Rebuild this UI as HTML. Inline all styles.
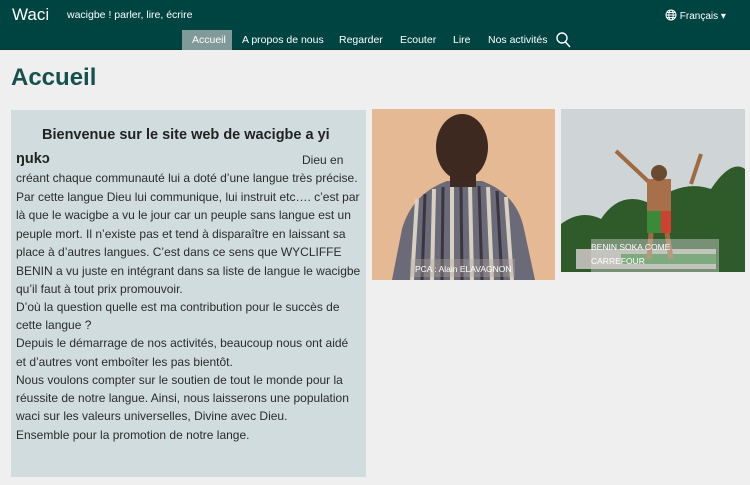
<!DOCTYPE html>
<html><head><meta charset="utf-8"><style>
*{margin:0;padding:0;box-sizing:border-box}
body{width:750px;height:485px;background:#efefef;font-family:"Liberation Sans",sans-serif;position:relative;overflow:hidden}
.hdr{position:absolute;left:0;top:0;width:750px;height:50px;background:#004442;border-bottom:1px solid #0a3332}
.t{position:absolute;color:#fff;white-space:nowrap}
.nav{position:absolute;top:30px;height:20px;line-height:20px;font-size:10.5px;color:#fff}
.act{background:#7f9a99;padding:0 10px}
h1{position:absolute;left:11px;top:64px;font-size:24px;color:#17514f;font-weight:bold}
.box{position:absolute;left:11px;top:110px;width:355px;height:367px;background:#d1dcdf}
.ln{position:absolute;left:16px;font-size:12px;color:#2b2b2b;white-space:nowrap;line-height:18px}
</style></head><body>
<div class="hdr">
<div class="t" style="left:12px;top:5px;font-size:17px">Waci</div>
<div class="t" style="left:67px;top:9px;font-size:10.5px">wacigbe ! parler, lire, écrire</div>
<div class="t" style="left:665px;top:9px;font-size:10px"><svg width="12" height="12" viewBox="0 0 12 12" style="vertical-align:-2px"><g fill="none" stroke="#fff" stroke-width="1"><circle cx="6" cy="6" r="5"/><ellipse cx="6" cy="6" rx="2.2" ry="5"/><path d="M1 6h10M2 3.5h8M2 8.5h8"/></g></svg> Français ▾</div>
<div class="nav act" style="left:182px;width:50px">Accueil</div>
<div class="nav" style="left:242px">A propos de nous</div>
<div class="nav" style="left:339px">Regarder</div>
<div class="nav" style="left:400px">Ecouter</div>
<div class="nav" style="left:453px">Lire</div>
<div class="nav" style="left:488px">Nos activités</div>
<svg style="position:absolute;left:556px;top:32px" width="15" height="16" viewBox="0 0 15 16"><circle cx="6" cy="6" r="5" fill="none" stroke="#fff" stroke-width="1.4"/><path d="M9.5 10l4.5 5" stroke="#fff" stroke-width="1.5"/></svg>
</div>
<h1>Accueil</h1>
<div class="box"></div>
<div class="ln" style="left:42px;top:126px;font-size:14.5px;font-weight:bold;color:#222">Bienvenue sur le site web de wacigbe a yi</div>
<div class="ln" style="top:150px;font-size:14.5px;font-weight:bold;color:#222">ŋukɔ</div>
<div class="ln" style="left:302px;top:151px">Dieu en</div>
<div class="ln" style="top:169px">créant chaque communauté lui a doté d’une langue très précise.</div>
<div class="ln" style="top:188px">Par cette langue Dieu lui communique, lui instruit etc…. c’est par</div>
<div class="ln" style="top:206px">là que le wacigbe a vu le jour car un peuple sans langue est un</div>
<div class="ln" style="top:225px">peuple mort. Il n’existe pas et tend à disparaître en laissant sa</div>
<div class="ln" style="top:243px">place à d’autres langues. C’est dans ce sens que WYCLIFFE</div>
<div class="ln" style="top:262px">BENIN a vu juste en intégrant dans sa liste de langue le wacigbe</div>
<div class="ln" style="top:280px">qu’il faut à tout prix promouvoir.</div>
<div class="ln" style="top:298px">D’où la question quelle est ma contribution pour le succès de</div>
<div class="ln" style="top:316px">cette langue ?</div>
<div class="ln" style="top:334px">Depuis le démarrage de nos activités, beaucoup nous ont aidé</div>
<div class="ln" style="top:353px">et d’autres vont emboîter les pas bientôt.</div>
<div class="ln" style="top:371px">Nous voulons compter sur le soutien de tout le monde pour la</div>
<div class="ln" style="top:389px">réussite de notre langue. Ainsi, nous laisserons une population</div>
<div class="ln" style="top:407px">waci sur les valeurs universelles, Divine avec Dieu.</div>
<div class="ln" style="top:426px">Ensemble pour la promotion de notre lange.</div>

<svg style="position:absolute;left:372px;top:109px" width="183" height="171" viewBox="0 0 183 171">
<rect width="183" height="171" fill="#e4b994"/>
<path d="M20 171 L30 120 Q40 85 75 72 L110 72 Q145 85 152 120 L163 171Z" fill="#6a6a78"/>
<g stroke="#d8d0c0" stroke-width="4"><path d="M45 90 L40 171M62 80 L60 171M80 76 L80 171M98 76 L100 171M116 78 L120 171M134 88 L140 171"/></g>
<g stroke="#3a3540" stroke-width="3"><path d="M53 85 L50 171M71 78 L70 171M89 76 L90 171M107 77 L110 171M125 82 L130 171"/></g>
<rect x="78" y="60" width="26" height="18" fill="#3d2a22"/>
<ellipse cx="90" cy="38" rx="26" ry="33" fill="#3e2920"/>
<rect x="38" y="150" width="105" height="18" fill="rgba(180,170,160,.35)"/>
<text x="43" y="163" font-family="Liberation Sans" font-size="8.5" fill="#fff">PCA : Alain ELAVAGNON</text>
</svg>
<svg style="position:absolute;left:561px;top:109px" width="184" height="163" viewBox="0 0 184 163">
<rect width="184" height="163" fill="#cfd4d6"/>
<path d="M0 115 Q20 100 40 110 Q60 80 90 95 Q120 70 150 80 Q170 50 184 60 L184 163 L0 163Z" fill="#2f5a2a"/>
<rect x="15" y="140" width="140" height="20" fill="#b8b8b0"/>
<rect x="60" y="145" width="95" height="10" fill="#3a8a3a"/>
<path d="M55 42 L90 75 M130 75 L140 45" stroke="#a06a40" stroke-width="4"/>
<rect x="86" y="70" width="24" height="35" fill="#a8704a"/>
<rect x="86" y="102" width="24" height="22" fill="#3a8a3a"/>
<rect x="100" y="102" width="10" height="22" fill="#d04030"/>
<path d="M90 124 L88 150 M106 124 L110 150" stroke="#a06a40" stroke-width="5"/>
<circle cx="98" cy="64" r="8" fill="#6a4a30"/>
<rect x="30" y="130" width="128" height="33" fill="rgba(210,210,210,.45)"/>
<text x="30" y="141" font-family="Liberation Sans" font-size="8.5" fill="#fff">BENIN SOKA COME</text>
<text x="30" y="155" font-family="Liberation Sans" font-size="8.5" fill="#fff">CARREFOUR</text>
</svg>
</body></html>
